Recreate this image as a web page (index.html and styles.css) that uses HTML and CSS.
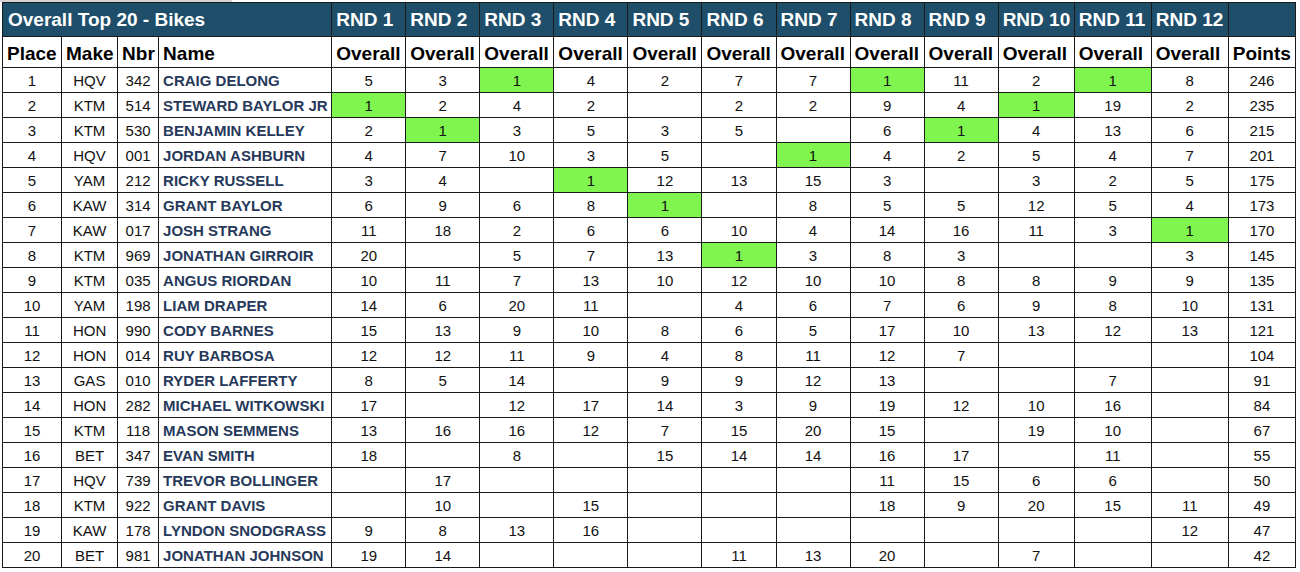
FILE: index.html
```html
<!DOCTYPE html>
<html lang="en">
<head>
<meta charset="utf-8">
<title>Overall Top 20 - Bikes</title>
<link rel="stylesheet" href="styles.css">
</head>
<body>
<div class="strip"></div>
<table class="standings">
  <colgroup>
    <col class="c-place"><col class="c-make"><col class="c-nbr"><col class="c-name">
    <col class="c-rnd"><col class="c-rnd"><col class="c-rnd"><col class="c-rnd"><col class="c-rnd"><col class="c-rnd"><col class="c-rnd"><col class="c-rnd"><col class="c-rnd">
    <col class="c-rnd10"><col class="c-rnd11"><col class="c-rnd11"><col class="c-pts">
  </colgroup>
  <thead>
    <tr class="title-row">
      <th colspan="4" class="title">Overall Top 20 - Bikes</th>
      <th>RND 1</th><th>RND 2</th><th>RND 3</th><th>RND 4</th><th>RND 5</th><th>RND 6</th><th>RND 7</th><th>RND 8</th><th>RND 9</th><th>RND 10</th><th>RND 11</th><th>RND 12</th><th></th>
    </tr>
    <tr class="sub-row">
      <th>Place</th><th>Make</th><th>Nbr</th><th>Name</th>
      <th>Overall</th><th>Overall</th><th>Overall</th><th>Overall</th><th>Overall</th><th>Overall</th><th>Overall</th><th>Overall</th><th>Overall</th><th>Overall</th><th>Overall</th><th>Overall</th><th>Points</th>
    </tr>
  </thead>
  <tbody>
    <tr><td>1</td><td>HQV</td><td>342</td><td class="name">CRAIG DELONG</td><td>5</td><td>3</td><td class="win">1</td><td>4</td><td>2</td><td>7</td><td>7</td><td class="win">1</td><td>11</td><td>2</td><td class="win">1</td><td>8</td><td>246</td></tr>
    <tr><td>2</td><td>KTM</td><td>514</td><td class="name">STEWARD BAYLOR JR</td><td class="win">1</td><td>2</td><td>4</td><td>2</td><td></td><td>2</td><td>2</td><td>9</td><td>4</td><td class="win">1</td><td>19</td><td>2</td><td>235</td></tr>
    <tr><td>3</td><td>KTM</td><td>530</td><td class="name">BENJAMIN KELLEY</td><td>2</td><td class="win">1</td><td>3</td><td>5</td><td>3</td><td>5</td><td></td><td>6</td><td class="win">1</td><td>4</td><td>13</td><td>6</td><td>215</td></tr>
    <tr><td>4</td><td>HQV</td><td>001</td><td class="name">JORDAN ASHBURN</td><td>4</td><td>7</td><td>10</td><td>3</td><td>5</td><td></td><td class="win">1</td><td>4</td><td>2</td><td>5</td><td>4</td><td>7</td><td>201</td></tr>
    <tr><td>5</td><td>YAM</td><td>212</td><td class="name">RICKY RUSSELL</td><td>3</td><td>4</td><td></td><td class="win">1</td><td>12</td><td>13</td><td>15</td><td>3</td><td></td><td>3</td><td>2</td><td>5</td><td>175</td></tr>
    <tr><td>6</td><td>KAW</td><td>314</td><td class="name">GRANT BAYLOR</td><td>6</td><td>9</td><td>6</td><td>8</td><td class="win">1</td><td></td><td>8</td><td>5</td><td>5</td><td>12</td><td>5</td><td>4</td><td>173</td></tr>
    <tr><td>7</td><td>KAW</td><td>017</td><td class="name">JOSH STRANG</td><td>11</td><td>18</td><td>2</td><td>6</td><td>6</td><td>10</td><td>4</td><td>14</td><td>16</td><td>11</td><td>3</td><td class="win">1</td><td>170</td></tr>
    <tr><td>8</td><td>KTM</td><td>969</td><td class="name">JONATHAN GIRROIR</td><td>20</td><td></td><td>5</td><td>7</td><td>13</td><td class="win">1</td><td>3</td><td>8</td><td>3</td><td></td><td></td><td>3</td><td>145</td></tr>
    <tr><td>9</td><td>KTM</td><td>035</td><td class="name">ANGUS RIORDAN</td><td>10</td><td>11</td><td>7</td><td>13</td><td>10</td><td>12</td><td>10</td><td>10</td><td>8</td><td>8</td><td>9</td><td>9</td><td>135</td></tr>
    <tr><td>10</td><td>YAM</td><td>198</td><td class="name">LIAM DRAPER</td><td>14</td><td>6</td><td>20</td><td>11</td><td></td><td>4</td><td>6</td><td>7</td><td>6</td><td>9</td><td>8</td><td>10</td><td>131</td></tr>
    <tr><td>11</td><td>HON</td><td>990</td><td class="name">CODY BARNES</td><td>15</td><td>13</td><td>9</td><td>10</td><td>8</td><td>6</td><td>5</td><td>17</td><td>10</td><td>13</td><td>12</td><td>13</td><td>121</td></tr>
    <tr><td>12</td><td>HON</td><td>014</td><td class="name">RUY BARBOSA</td><td>12</td><td>12</td><td>11</td><td>9</td><td>4</td><td>8</td><td>11</td><td>12</td><td>7</td><td></td><td></td><td></td><td>104</td></tr>
    <tr><td>13</td><td>GAS</td><td>010</td><td class="name">RYDER LAFFERTY</td><td>8</td><td>5</td><td>14</td><td></td><td>9</td><td>9</td><td>12</td><td>13</td><td></td><td></td><td>7</td><td></td><td>91</td></tr>
    <tr><td>14</td><td>HON</td><td>282</td><td class="name">MICHAEL WITKOWSKI</td><td>17</td><td></td><td>12</td><td>17</td><td>14</td><td>3</td><td>9</td><td>19</td><td>12</td><td>10</td><td>16</td><td></td><td>84</td></tr>
    <tr><td>15</td><td>KTM</td><td>118</td><td class="name">MASON SEMMENS</td><td>13</td><td>16</td><td>16</td><td>12</td><td>7</td><td>15</td><td>20</td><td>15</td><td></td><td>19</td><td>10</td><td></td><td>67</td></tr>
    <tr><td>16</td><td>BET</td><td>347</td><td class="name">EVAN SMITH</td><td>18</td><td></td><td>8</td><td></td><td>15</td><td>14</td><td>14</td><td>16</td><td>17</td><td></td><td>11</td><td></td><td>55</td></tr>
    <tr><td>17</td><td>HQV</td><td>739</td><td class="name">TREVOR BOLLINGER</td><td></td><td>17</td><td></td><td></td><td></td><td></td><td></td><td>11</td><td>15</td><td>6</td><td>6</td><td></td><td>50</td></tr>
    <tr><td>18</td><td>KTM</td><td>922</td><td class="name">GRANT DAVIS</td><td></td><td>10</td><td></td><td>15</td><td></td><td></td><td></td><td>18</td><td>9</td><td>20</td><td>15</td><td>11</td><td>49</td></tr>
    <tr><td>19</td><td>KAW</td><td>178</td><td class="name">LYNDON SNODGRASS</td><td>9</td><td>8</td><td>13</td><td>16</td><td></td><td></td><td></td><td></td><td></td><td></td><td></td><td>12</td><td>47</td></tr>
    <tr><td>20</td><td>BET</td><td>981</td><td class="name">JONATHAN JOHNSON</td><td>19</td><td>14</td><td></td><td></td><td></td><td>11</td><td>13</td><td>20</td><td></td><td>7</td><td></td><td></td><td>42</td></tr>
  </tbody>
</table>
</body>
</html>
```

FILE: styles.css
```css
html, body {
  margin: 0;
  padding: 0;
  background: #ffffff;
}

body {
  font-family: "Liberation Sans", Arial, sans-serif;
  color: #000;
}

.strip {
  width: 232px;
  height: 2px;
  background: #d4d4d4;
}

.standings {
  margin-left: 2px;
  border-collapse: collapse;
  table-layout: fixed;
  width: 1294px;
  border: 1px solid #1a1a1a;
}

.c-place { width: 59px; }
.c-make { width: 56px; }
.c-nbr { width: 41px; }
.c-name { width: 173px; }
.c-rnd { width: 74px; }
.c-rnd10 { width: 76px; }
.c-rnd11 { width: 77px; }
.c-pts { width: 67px; }

.standings th,
.standings td {
  border: 1px solid #1a1a1a;
  padding: 0;
  overflow: hidden;
  white-space: nowrap;
}

.title-row {
  height: 34px;
}

.title-row th {
  background: #1f4e6a;
  color: #ffffff;
  font-size: 19px;
  font-weight: bold;
  text-align: left;
  padding: 0 0 0 4px;
  vertical-align: middle;
}

.title-row th.title {
  padding-left: 5px;
}

.sub-row {
  height: 31px;
}

.sub-row th {
  background: #ffffff;
  color: #000;
  font-size: 19px;
  font-weight: bold;
  text-align: left;
  padding: 3px 0 0 4px;
  vertical-align: middle;
}

.standings tbody tr {
  height: 25px;
}

.standings tbody td {
  font-size: 15px;
  text-align: center;
  vertical-align: middle;
  color: #111;
}

.standings tbody td.name {
  text-align: left;
  padding-left: 4px;
  font-weight: bold;
  color: #27395a;
}

.standings tbody td.win {
  background: #80f54f;
}
```
